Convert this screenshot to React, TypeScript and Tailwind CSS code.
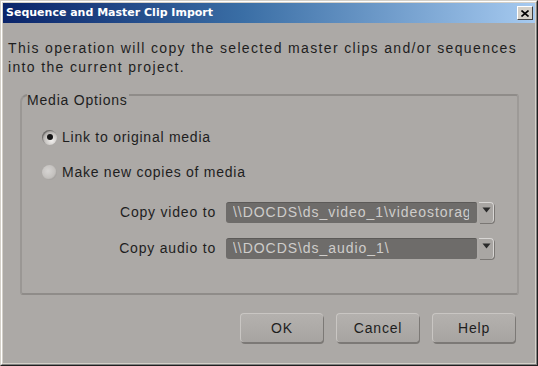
import { useState } from 'react';

function Radio({ checked, label, onClick }: { checked: boolean; label: string; onClick: () => void }) {
  return (
    <button type="button" onClick={onClick} className="flex items-center h-[20px] text-left">
      <span
        className={
          checked
            ? 'w-[15px] h-[15px] rounded-full bg-[radial-gradient(circle_at_65%_70%,#f2f0ee_0%,#c9c6c3_45%,#7d7a77_100%)] shadow-[inset_1px_1px_1px_rgba(0,0,0,0.35)] flex items-center justify-center'
            : 'w-[15px] h-[15px] rounded-full bg-[radial-gradient(circle_at_40%_40%,#d6d4d2_0%,#c2bfbc_60%,#a8a5a2_100%)] shadow-[inset_-1px_-1px_1px_rgba(0,0,0,0.12)]'
        }
      >
        {checked && <span className="w-[6px] h-[6px] rounded-full bg-[#151515]" />}
      </span>
      <span className="ml-[5px] text-[14px] tracking-[0.75px] text-[#1e1e1e]">{label}</span>
    </button>
  );
}

function PathSelect({ value }: { value: string }) {
  return (
    <div className="flex h-[21px] w-[268px]">
      <div className="flex-1 min-w-0 bg-[#6e6c6a] rounded-l-[3px] rounded-r-[2px] border-t border-[#5c5a58] pl-[7px] pr-[8px] mr-[2px]">
        <div className="overflow-hidden whitespace-nowrap text-[14px] tracking-[0.95px] leading-[19px] text-[#cfcdcb]">
          {value}
        </div>
      </div>
      <div className="w-[15px] flex items-start justify-center pt-[4px] rounded-r-[4px] bg-[#a9a6a3] border-t border-r border-[#d8d6d4] shadow-[1px_1px_0_#7a7774]">
        <svg width="9" height="6" viewBox="0 0 9 6">
          <path d="M0.5 0.5 L8.5 0.5 L4.5 5.5 Z" fill="#2a2a2a" />
        </svg>
      </div>
    </div>
  );
}

function DlgButton({ label }: { label: string }) {
  return (
    <button
      type="button"
      className="w-[83px] h-[29px] rounded-[4px] bg-[linear-gradient(#b4b1ae,#a7a4a1)] border-t border-l border-[#c9c6c3] shadow-[1px_2px_0_#7c7976] text-[14px] tracking-[0.8px] text-[#1e1e1e]"
    >
      {label}
    </button>
  );
}

export default function App() {
  const [mode, setMode] = useState<'link' | 'copy'>('link');

  return (
    <div
      className="w-[538px] h-[366px] bg-[#d4d0c8] border-t border-l border-[#d4d0c8] border-r border-b border-r-[#202020] border-b-[#202020] flex flex-col overflow-hidden"
      style={{ fontFamily: '"Liberation Sans", Arial, sans-serif' }}
    >
      <div className="flex-1 flex flex-col border-t border-l border-white border-r border-b border-r-[#808080] border-b-[#808080] p-[1px]">
        {/* title bar */}
        <div className="h-[20px] flex items-center justify-between pl-[3px] pr-[2px] bg-[linear-gradient(90deg,#0a246a_0%,#3a6ea5_45%,#a6caf0_100%)]">
          <span
            className="text-white font-bold text-[11px]"
            style={{ fontFamily: '"DejaVu Sans", Verdana, sans-serif' }}
          >
            Sequence and Master Clip Import
          </span>
          <button
            type="button"
            className="w-[16px] h-[14px] bg-[#d4d0c8] border-t border-l border-white border-r border-b border-r-[#404040] border-b-[#404040] flex items-center justify-center"
          >
            <svg width="8" height="7" viewBox="0 0 8 7">
              <path d="M0.5 0.5 L7.5 6.5 M7.5 0.5 L0.5 6.5" stroke="#000" strokeWidth="1.6" />
            </svg>
          </button>
        </div>

        {/* body */}
        <div className="flex-1 bg-[#aca9a6] flex flex-col pt-[16px] pl-[5px] pr-[16px]">
          <p className="text-[14px] leading-[19px] tracking-[1.35px] text-[#1e1e1e] whitespace-nowrap">
            This operation will copy the selected master clips and/or sequences
            <br />
            into the current project.
          </p>

          <div className="mt-[17px] ml-[12px] h-[201px] flex flex-col rounded-tl-[8px] rounded-bl-[3px] rounded-r-[3px] border-2 border-t-[#8f8c89] border-l-[#9a9794] border-b-[#8f8c89] border-r-[#9d9a97]">
            <span className="self-start -mt-[4px] ml-[5px] bg-[#aca9a6] pr-[1px] text-[14px] leading-[16px] tracking-[0.8px] text-[#1e1e1e]">
              Media Options
            </span>
            <div className="flex flex-col pl-[20px] pt-[19px] gap-[15px]">
              <Radio checked={mode === 'link'} label="Link to original media" onClick={() => setMode('link')} />
              <Radio checked={mode === 'copy'} label="Make new copies of media" onClick={() => setMode('copy')} />
            </div>
            <div className="grid grid-cols-[194px_268px] items-center gap-x-[10px] gap-y-[15px] mt-[20px]">
              <span className="text-right text-[14px] tracking-[0.8px] text-[#1e1e1e]">Copy video to</span>
              <PathSelect value="\\DOCDS\ds_video_1\videostorage" />
              <span className="text-right text-[14px] tracking-[0.8px] text-[#1e1e1e]">Copy audio to</span>
              <PathSelect value="\\DOCDS\ds_audio_1\" />
            </div>
          </div>

          <div className="flex justify-end gap-[13px] mt-[18px] mr-[4px]">
            <DlgButton label="OK" />
            <DlgButton label="Cancel" />
            <DlgButton label="Help" />
          </div>
        </div>
      </div>
    </div>
  );
}
